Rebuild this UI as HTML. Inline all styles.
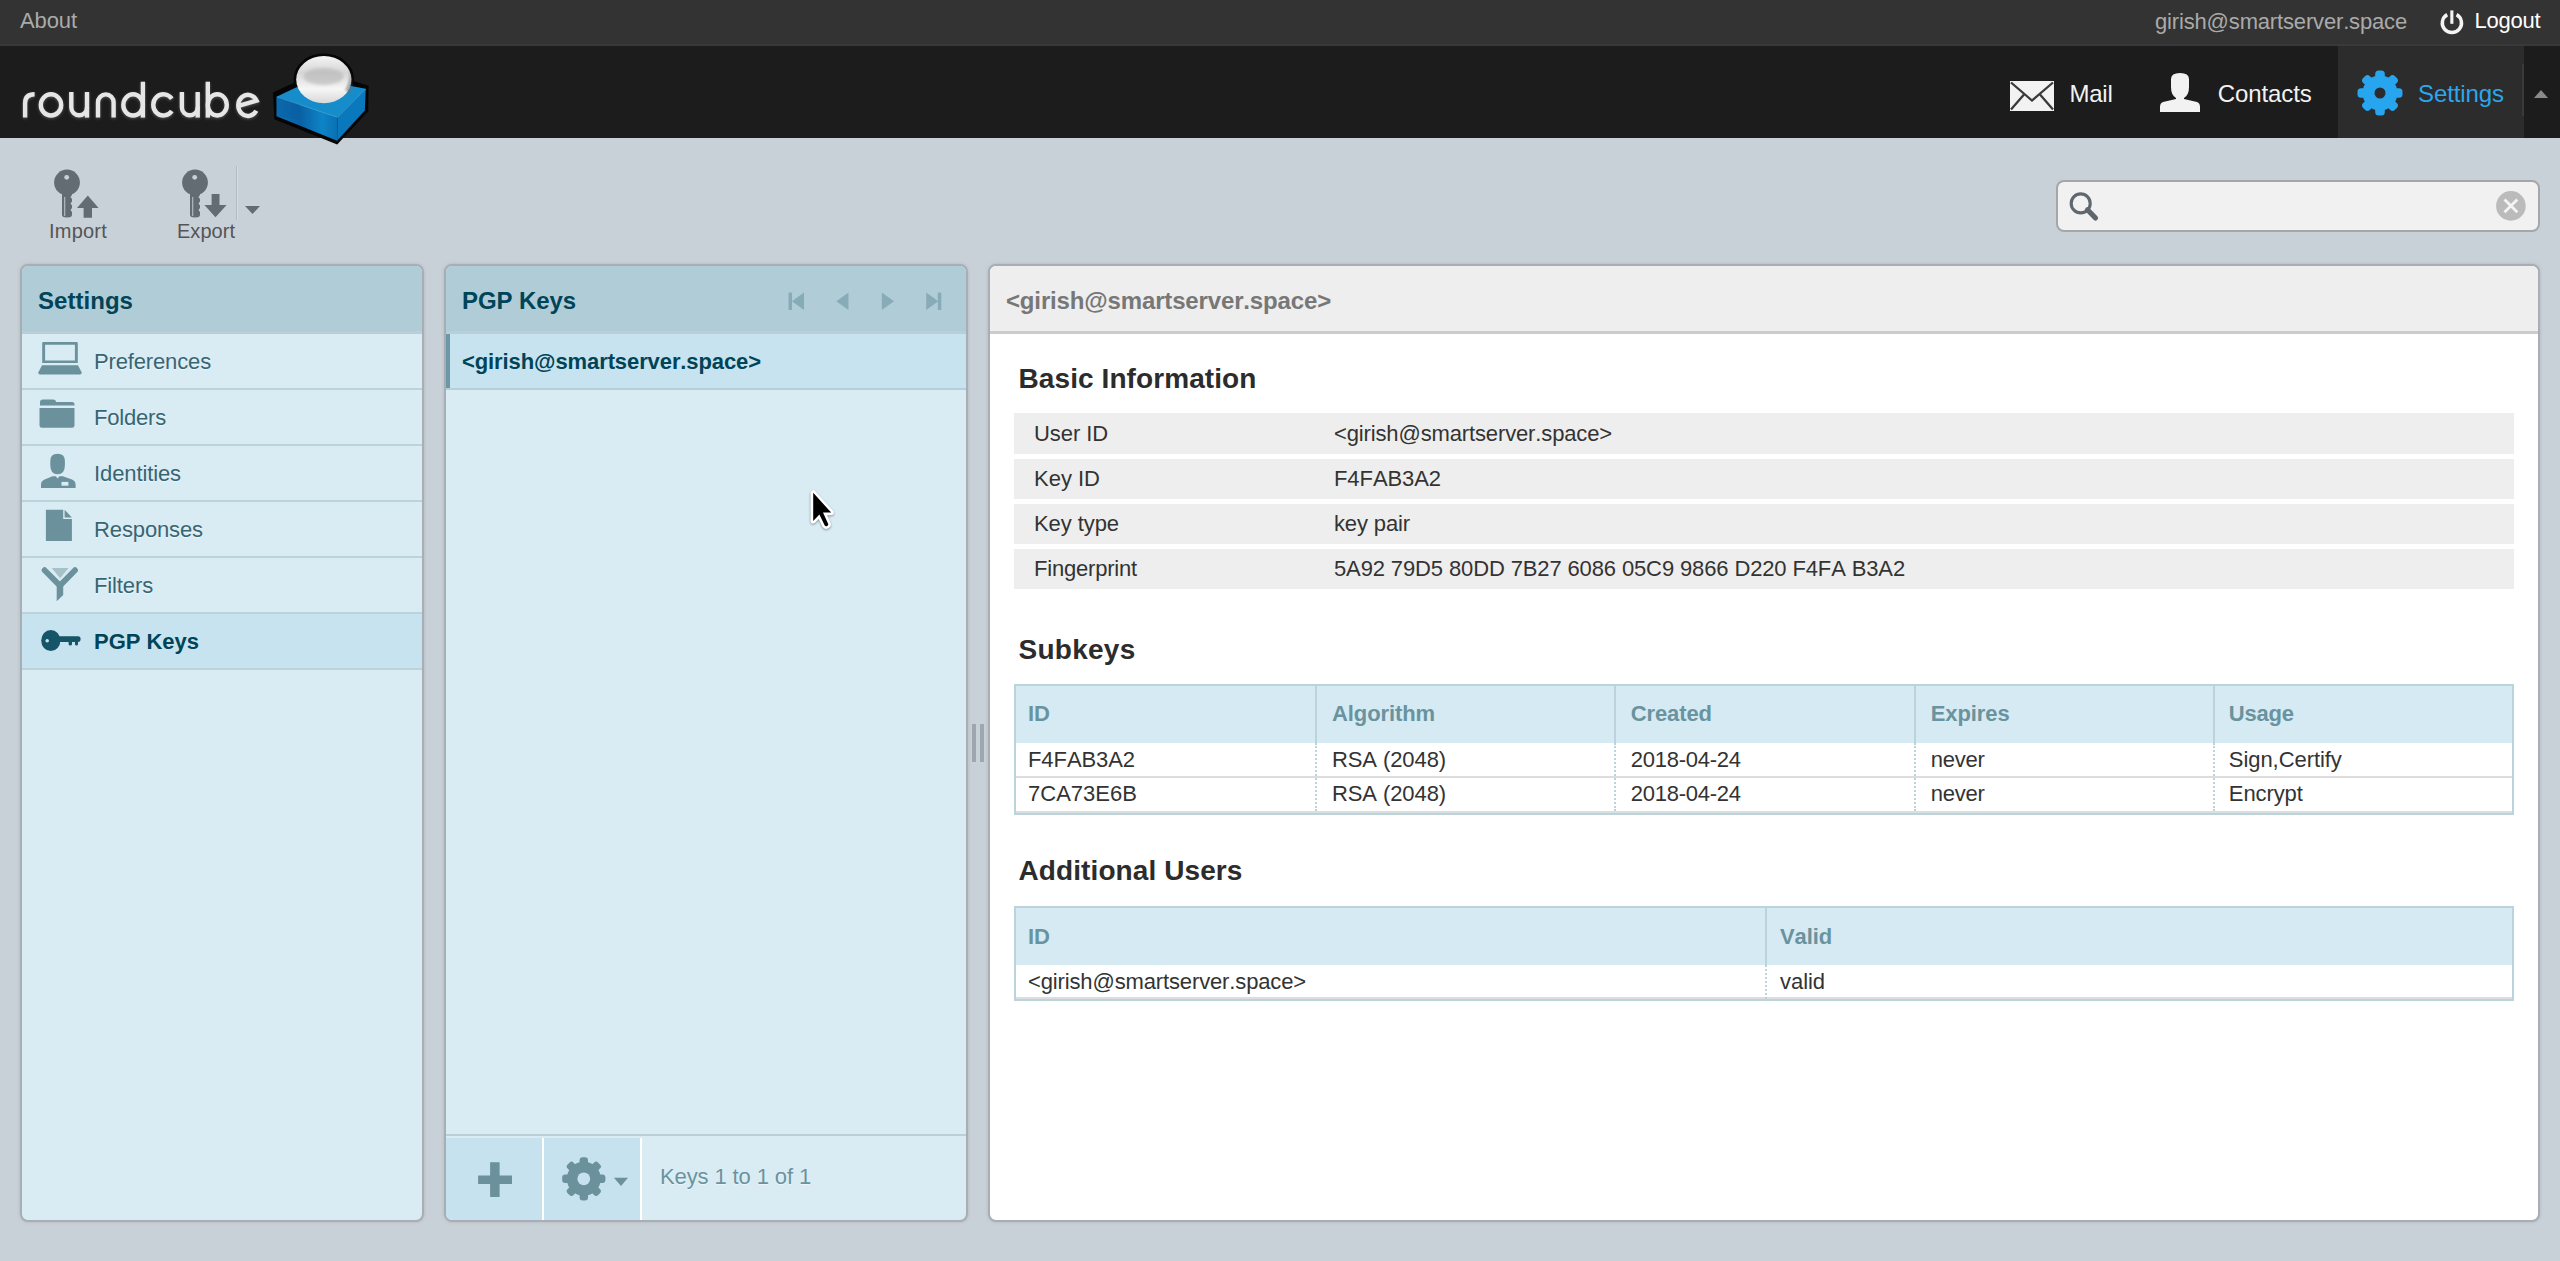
<!DOCTYPE html>
<html><head><meta charset="utf-8">
<style>
*{box-sizing:border-box;margin:0;padding:0}
html,body{width:2560px;height:1261px;overflow:hidden}
body{background:#c9d1d8;font-family:"Liberation Sans",sans-serif;position:relative;color:#333;font-kerning:none}
.a{position:absolute;white-space:nowrap}
.t22{font-size:22px;line-height:22px}
.t24{font-size:24px;line-height:24px}
.t20{font-size:20px;line-height:20px}
.t28{font-size:28px;line-height:28px}
.b{font-weight:bold}
#topline{position:absolute;left:0;top:0;width:2560px;height:46px;background:#333;border-bottom:2px solid #393939}
#header{position:absolute;left:0;top:46px;width:2560px;height:92px;background:#1c1c1c}
.panel{position:absolute;top:264px;height:958px;border:2px solid #a8aeb5;border-radius:8px;overflow:hidden;box-shadow:0 0 3px rgba(150,150,150,.5)}
.btitle{position:absolute;left:0;top:0;right:0;height:68px;background:#b0ccd7;border-bottom:3px solid #b8cfd8}
.listbg{background:#d9ecf4}
.li{position:absolute;left:0;right:0;height:56px;border-bottom:2px solid #bbd3da}
.ltxt{color:#376572;text-shadow:0 1px 1px rgba(255,255,255,.55)}
</style></head><body>
<div id="topline">
  <span class="a t22" style="left:20px;top:10px;color:#aaa;letter-spacing:-0.098px">About</span>
  <span class="a t22" style="left:2155px;top:10.5px;color:#aaa;letter-spacing:-0.160px">girish@smartserver.space</span>
  <svg class="a" style="left:2436px;top:6px" width="32" height="32" viewBox="2436 6 32 32">
    <path d="M2447.2 14.6 A9.6 9.6 0 1 0 2456.6 14.6" fill="none" stroke="#f4f4f4" stroke-width="3.5"/>
    <rect x="2450.3" y="10.4" width="3.1" height="13.4" fill="#f4f4f4"/>
  </svg>
  <span class="a t22" style="left:2474.5px;top:10px;color:#fff;letter-spacing:-0.215px">Logout</span>
</div>
<div id="header">
  <svg class="a" style="left:0;top:0" width="400" height="100" viewBox="0 46 400 100">
    <defs>
      <filter id="glow" x="-20%" y="-20%" width="140%" height="160%"><feGaussianBlur in="SourceAlpha" stdDeviation="1.6"/><feOffset dy="2"/><feComponentTransfer><feFuncA type="linear" slope="0.55"/></feComponentTransfer><feFlood flood-color="#fff"/><feComposite operator="in" in2="SourceAlpha"/></filter>
      <linearGradient id="ball" x1="0" y1="0" x2="0" y2="1"><stop offset="0" stop-color="#f4f4f4"/><stop offset="0.35" stop-color="#d6d6d6"/><stop offset="0.7" stop-color="#f6f6f6"/><stop offset="1" stop-color="#d8d8d8"/></linearGradient>
      <linearGradient id="bl" x1="0" y1="0" x2="1" y2="0"><stop offset="0" stop-color="#0c72b8"/><stop offset="0.4" stop-color="#0a62a6"/><stop offset="0.75" stop-color="#0d84c6"/><stop offset="1" stop-color="#0a6fb3"/></linearGradient>
    </defs>
    <g fill="none" stroke="#e6e6e6" stroke-width="4.4" style="filter:blur(0.35px) drop-shadow(0 1.5px 1.5px rgba(255,255,255,.25))">
      <path d="M25.1 117.5 V103 Q25.1 94.3 34.6 94.3"/>
      <ellipse cx="51" cy="104.9" rx="10.2" ry="10.6"/>
      <path d="M71.3 92 V107.4 A7.85 7.9 0 0 0 87 107.4 V92"/>
      <path d="M87 107 V117.6"/>
      <path d="M98 117.6 V102.3 A7.8 7.9 0 0 1 113.6 102.3 V117.6"/>
      <ellipse cx="133.1" cy="104.9" rx="9.8" ry="10.6"/><path d="M142.9 81.7 V117.6"/>
      <path d="M171.8 98.8 A10.2 10.6 0 1 0 171.8 111"/>
      <path d="M181.9 92 V107.4 A7.9 7.9 0 0 0 197.7 107.4 V92"/>
      <path d="M197.7 107 V117.6"/>
      <ellipse cx="217.3" cy="104.9" rx="9.5" ry="10.6"/><path d="M207.8 81.7 V117.6"/>
      <path d="M256.3 110.8 A9.7 10.6 0 1 1 256.6 100.6 L237.6 106.2"/>
    </g>
    <g>
      <path d="M273 92.5 L300 80 L350 80 L368.6 85.8 L368.2 111.2 L337.2 144.6 L274.3 119.2 Z" fill="#050505"/>
      <ellipse cx="323.8" cy="79.2" rx="30.2" ry="25.8" fill="#050505"/>
      <path d="M276.5 96.8 L337.5 117 L337.1 140.8 L276.6 116.2 Z" fill="url(#bl)"/>
      <path d="M337.5 117 L365.8 88.8 L364.8 110.4 L337.1 140.8 Z" fill="#0a78bd"/>
      <path d="M276.5 96.8 L296.5 87.2 L351 86 L365.8 88.8 L337.5 117 Z" fill="#178ccb"/>
      <path d="M277 97 L337.5 117.2 L365.5 89" fill="none" stroke="#3aa8de" stroke-width="0.9"/>
      <ellipse cx="323.8" cy="79.6" rx="27.6" ry="23.6" fill="url(#ball)"/>
      <ellipse cx="323.5" cy="76.5" rx="20" ry="8.5" fill="#b5b5b5" opacity=".6" style="filter:blur(1.6px)"/>
      <path d="M345 90 Q351 80 349 69 Q353 80 351 94 Z" fill="#6f6f6f" opacity=".55" style="filter:blur(1.2px)"/>
      <path d="M276.5 96.8 L300 104.5 L300 120 L276.6 116.2 Z" fill="#0a5a98" opacity=".35"/>
    </g>
  </svg>
  <!-- taskbar -->
  <svg class="a" style="left:2010px;top:35px" width="44" height="30" viewBox="0 0 44 30">
    <rect x="0" y="0" width="44" height="30" fill="#f2f2f2"/>
    <path d="M1 1.5 L22 19.5 L43 1.5" fill="none" stroke="#3a3a3a" stroke-width="2.3"/>
    <path d="M1 28.5 L14 13.5 M43 28.5 L30 13.5" fill="none" stroke="#3a3a3a" stroke-width="2.3"/>
  </svg>
  <span class="a t24" style="left:2069.5px;top:36.3px;color:#f2f2f2;letter-spacing:-0.251px">Mail</span>
  <svg class="a" style="left:2159px;top:27px" width="42" height="40" viewBox="0 0 42 40">
    <path d="M12 6 Q12 0 21 0 Q30 0 30 6 L30 14 Q30 22 25 25 L25 26 L38 29 Q41 30 41 34 L41 39 L1 39 L1 34 Q1 30 4 29 L17 26 L17 25 Q12 22 12 14 Z" fill="#f2f2f2"/>
  </svg>
  <span class="a t24" style="left:2217.7px;top:36.3px;color:#f2f2f2;letter-spacing:-0.089px">Contacts</span>
  <div class="a" style="left:2338px;top:0;width:186px;height:92px;background:#2c2c2c"></div>
  <div class="a" style="left:2522px;top:18px;width:2px;height:52px;background:#3a3a3a"></div>
  <svg class="a" style="left:2357px;top:24px" width="46" height="46" viewBox="-23 -23 46 46">
    <g transform="translate(0 0)" fill="#27a6ef"><circle r="17.5"/><rect x="-4.8" y="-22.5" width="9.6" height="9.0" rx="3.5" transform="rotate(0.0)"/><rect x="-4.8" y="-22.5" width="9.6" height="9.0" rx="3.5" transform="rotate(45.0)"/><rect x="-4.8" y="-22.5" width="9.6" height="9.0" rx="3.5" transform="rotate(90.0)"/><rect x="-4.8" y="-22.5" width="9.6" height="9.0" rx="3.5" transform="rotate(135.0)"/><rect x="-4.8" y="-22.5" width="9.6" height="9.0" rx="3.5" transform="rotate(180.0)"/><rect x="-4.8" y="-22.5" width="9.6" height="9.0" rx="3.5" transform="rotate(225.0)"/><rect x="-4.8" y="-22.5" width="9.6" height="9.0" rx="3.5" transform="rotate(270.0)"/><rect x="-4.8" y="-22.5" width="9.6" height="9.0" rx="3.5" transform="rotate(315.0)"/><circle r="5.5" fill="#2c2c2c"/></g>
  </svg>
  <span class="a t24" style="left:2418px;top:36.3px;color:#2ba6ef;letter-spacing:-0.090px">Settings</span>
  <svg class="a" style="left:2534px;top:44px" width="14" height="8" viewBox="0 0 14 8"><path d="M0 8 L7 0 L14 8Z" fill="#8a8a8a"/></svg>
</div>


<!-- toolbar -->
<svg class="a" style="left:50px;top:168px" width="52" height="52" viewBox="50 168 52 52">
  <g fill="#646c73">
    <circle cx="67" cy="182.5" r="12.9"/>
    <path d="M62 190 H72 V195 L70.5 197 L72 199 V201.5 L70.5 203.5 L72 205.5 V208 L70.5 210 L72 212 V215 Q72 217.5 67 217.5 Q62 217.5 62 215 Z"/>
    <path d="M77 208 L87.8 195.6 L98.6 208 H92 V217.7 H83.6 V208 Z"/>
  </g>
  <circle cx="66.7" cy="177.3" r="2.4" fill="#c9d1d8"/>
  <rect x="64" y="197" width="1.3" height="19" fill="#aab2b8"/>
</svg>
<span class="a t20" style="left:49px;top:221px;color:#555;letter-spacing:0.220px">Import</span>
<svg class="a" style="left:178px;top:168px" width="52" height="52" viewBox="178 168 52 52">
  <g fill="#646c73">
    <circle cx="195" cy="182.5" r="12.9"/>
    <path d="M190 190 H200 V195 L198.5 197 L200 199 V201.5 L198.5 203.5 L200 205.5 V208 L198.5 210 L200 212 V215 Q200 217.5 195 217.5 Q190 217.5 190 215 Z"/>
    <path d="M211.6 194 H219.5 V205 H226.6 L215.5 217.2 L204.4 205 H211.6 Z"/>
  </g>
  <circle cx="194.7" cy="177.3" r="2.4" fill="#c9d1d8"/>
  <rect x="192" y="197" width="1.3" height="19" fill="#aab2b8"/>
</svg>
<span class="a t20" style="left:177px;top:221px;color:#555;letter-spacing:0.033px">Export</span>
<div class="a" style="left:236px;top:166px;width:1px;height:54px;background:#b3bac1"></div>
<div class="a" style="left:237px;top:166px;width:1px;height:54px;background:#d6dce1"></div>
<svg class="a" style="left:245px;top:206px" width="15" height="8" viewBox="0 0 15 8"><path d="M0 0 H15 L7.5 8Z" fill="#646c73"/></svg>

<!-- search -->
<div class="a" style="left:2056px;top:180px;width:484px;height:52px;background:#f1f1f1;border:2px solid #a4a7aa;border-radius:8px"></div>
<svg class="a" style="left:2066px;top:190px" width="34" height="34" viewBox="2066 190 34 34">
  <circle cx="2080.7" cy="203.4" r="9.5" fill="none" stroke="#60686e" stroke-width="3.1"/>
  <path d="M2087.5 209.8 L2095.5 218" stroke="#5f676d" stroke-width="5.2" stroke-linecap="round"/>
</svg>
<svg class="a" style="left:2494px;top:189px" width="34" height="34" viewBox="2494 189 34 34">
  <circle cx="2510.9" cy="205.9" r="14.8" fill="#bbb"/>
  <path d="M2504.5 199.5 L2517.3 212.3 M2517.3 199.5 L2504.5 212.3" stroke="#f4f4f4" stroke-width="2.8"/>
</svg>

<!-- left panel -->
<div class="panel listbg" style="left:20px;width:404px">
  <div class="btitle"><span class="a t24 b" style="left:16px;top:23px;color:#004458;letter-spacing:0.041px">Settings</span></div>
  <div class="li" style="top:68px;height:56px;"></div>
  <span class="a t22 ltxt" style="left:72px;top:85.0px;letter-spacing:-0.147px">Preferences</span>
  <div class="li" style="top:124px;height:56px;"></div>
  <span class="a t22 ltxt" style="left:72px;top:141.0px;letter-spacing:-0.194px">Folders</span>
  <div class="li" style="top:180px;height:56px;"></div>
  <span class="a t22 ltxt" style="left:72px;top:197.0px;letter-spacing:-0.105px">Identities</span>
  <div class="li" style="top:236px;height:56px;"></div>
  <span class="a t22 ltxt" style="left:72px;top:253.0px;letter-spacing:-0.118px">Responses</span>
  <div class="li" style="top:292px;height:56px;"></div>
  <span class="a t22 ltxt" style="left:72px;top:309.0px;letter-spacing:-0.127px">Filters</span>
  <div class="li" style="top:348px;height:56px;background:#c7e3ef;"></div>
  <span class="a t22 b" style="left:72px;top:365.0px;color:#004458;letter-spacing:-0.021px">PGP Keys</span>
  <svg class="a" style="left:0;top:0" width="80" height="420" viewBox="22 266 80 420">
    <g fill="#6b919c">
      <path d="M43.5 341.9 H76.5 Q77.8 341.9 77.8 343.2 V363.1 H42.2 V343.2 Q42.2 341.9 43.5 341.9 Z M45.1 344.8 V360.6 H74.9 V344.8 Z" fill-rule="evenodd"/>
      <path d="M42 365.3 H78 L81.6 372.3 Q82 374.5 80 374.5 H40 Q38 374.5 38.4 372.3 Z"/>
      <path d="M40 402 Q40 399.5 43 399.5 H53 Q56 399.5 56 402 H72 Q74.5 402 74.5 404.5 V405.5 H40 Z"/>
      <path d="M39.5 408 H74.5 V425.5 Q74.5 427.8 72 427.8 H42 Q39.5 427.8 39.5 425.5 Z"/>
      <path d="M50.3 461 Q50.3 453.7 57.6 453.7 Q64.9 453.7 64.9 461 V465 Q64.9 474.3 57.6 474.3 Q50.3 474.3 50.3 465 Z"/>
      <path d="M52.5 476.2 H55.8 L57.6 478.4 L59.4 476.2 H62.8 L72 479.5 Q75.6 481 75.6 484.5 V488 H41 V484.5 Q41 481 44.6 479.5 Z"/>
      <path d="M45.9 509.8 H63.2 V518.9 H71.9 V541.1 H45.9 Z"/>
      <path d="M64.6 509.8 L71.9 517.4 H64.6 Z"/>
      <path d="M56.7 584 H63.2 V595 L56.7 601.3 Z"/>
    </g>
    <path d="M44.6 570.2 L59.9 585.6 L75 570.2" fill="none" stroke="#6b919c" stroke-width="5.8" stroke-linecap="round" stroke-linejoin="round"/>
    <path d="M51.7 568 H68.6 L60.1 578.2 Z" fill="#a7c1c9"/>
    <rect x="61.5" y="481.9" width="6.9" height="3.8" fill="#d9ecf4"/>
    <g fill="#165468">
      <ellipse cx="50.8" cy="640.5" rx="9.6" ry="10.6"/>
      <path d="M57 636.3 H78 Q80.6 636.3 80.6 639.1 Q80.6 642 78 642 V644 Q78 645.5 76.6 645.5 Q75 645.5 75 644 V642 H72 V644 Q72 645.5 70.3 645.5 Q68.6 645.5 68.6 644 V642 H57 Z"/>
    </g>
    <circle cx="47.2" cy="640.8" r="1.8" fill="#c7e3ef"/>
  </svg>
</div>
<!-- middle panel -->
<div class="panel listbg" style="left:444px;width:524px">
  <div class="btitle"><span class="a t24 b" style="left:16px;top:23px;color:#004458;letter-spacing:-0.091px">PGP Keys</span>
    <svg class="a" style="left:0;top:0" width="520" height="66" viewBox="446 266 520 66">
      <g fill="#88acb7">
        <rect x="788.5" y="292.5" width="3.5" height="17.5"/>
        <path d="M804 292.5 V310 L792 301.2 Z"/>
        <path d="M848.5 292.5 V310 L836.3 301.2 Z"/>
        <path d="M881.8 292.5 V310 L894 301.2 Z"/>
        <path d="M926.2 292.5 V310 L938.3 301.2 Z"/>
        <rect x="937.8" y="292.5" width="3.5" height="17.5"/>
      </g>
    </svg>
  </div>
  <div class="a" style="left:0;top:68px;width:520px;height:56px;background:#c7e3ef;border-bottom:2px solid #b5ced7"></div>
  <div class="a" style="left:0;top:68px;width:4px;height:54px;background:#6c98a5"></div>
  <span class="a t22 b" style="left:16px;top:84.6px;color:#004458;letter-spacing:-0.097px">&lt;girish@smartserver.space&gt;</span>
  <div class="a" style="left:0;top:868px;width:520px;height:88px;border-top:2px solid #b9d0d8"></div>
  <div class="a" style="left:0;top:872px;width:98px;height:84px;background:#c6e2ee;border-right:2px solid #fff"></div>
  <div class="a" style="left:98px;top:872px;width:98px;height:84px;background:#c6e2ee;border-right:2px solid #fff"></div>
  <svg class="a" style="left:0;top:868px" width="200" height="88" viewBox="446 1134 200 88">
    <g fill="#6b919c">
      <path d="M490.1 1162.2 H499.6 V1175.5 H512 V1184.1 H499.6 V1197 H490.1 V1184.1 H478.1 V1175.5 H490.1 Z"/>
      <g transform="translate(583.8 1178.8)" fill="#6b919c"><circle r="17"/><rect x="-4.2" y="-21.6" width="8.4" height="8.600000000000001" rx="3" transform="rotate(0.0)"/><rect x="-4.2" y="-21.6" width="8.4" height="8.600000000000001" rx="3" transform="rotate(45.0)"/><rect x="-4.2" y="-21.6" width="8.4" height="8.600000000000001" rx="3" transform="rotate(90.0)"/><rect x="-4.2" y="-21.6" width="8.4" height="8.600000000000001" rx="3" transform="rotate(135.0)"/><rect x="-4.2" y="-21.6" width="8.4" height="8.600000000000001" rx="3" transform="rotate(180.0)"/><rect x="-4.2" y="-21.6" width="8.4" height="8.600000000000001" rx="3" transform="rotate(225.0)"/><rect x="-4.2" y="-21.6" width="8.4" height="8.600000000000001" rx="3" transform="rotate(270.0)"/><rect x="-4.2" y="-21.6" width="8.4" height="8.600000000000001" rx="3" transform="rotate(315.0)"/><circle r="6.4" fill="#c6e2ee"/></g>
      <path d="M613.9 1177.7 H628 L621 1185.9 Z"/>
    </g>
  </svg>
  <span class="a t22" style="left:214px;top:900px;color:#69939e;text-shadow:0 1px 1px rgba(255,255,255,.55);letter-spacing:-0.117px">Keys 1 to 1 of 1</span>
</div>
<!-- right panel -->
<div class="panel" style="left:988px;width:1552px;background:#fff">
  <div class="btitle" style="background:#eee;border-bottom-color:#ccc"><span class="a t24 b" style="left:16px;top:23px;color:#777;letter-spacing:-0.151px">&lt;girish@smartserver.space&gt;</span></div>
  <span class="a t28 b" style="left:28.5px;top:98.8px;color:#2c2c2c;letter-spacing:0.089px">Basic Information</span>
  <div class="a" style="left:24px;top:147.3px;width:1500px;height:40.5px;background:#eee"></div>
  <span class="a t22" style="left:44.0px;top:156.7px;color:#333;letter-spacing:-0.080px">User ID</span>
  <span class="a t22" style="left:344.0px;top:156.7px;color:#333;letter-spacing:-0.136px">&lt;girish@smartserver.space&gt;</span>
  <div class="a" style="left:24px;top:192.5px;width:1500px;height:40.5px;background:#eee"></div>
  <span class="a t22" style="left:44.0px;top:201.9px;color:#333;letter-spacing:-0.004px">Key ID</span>
  <span class="a t22" style="left:344.0px;top:201.9px;color:#333;letter-spacing:-0.076px">F4FAB3A2</span>
  <div class="a" style="left:24px;top:237.7px;width:1500px;height:40.5px;background:#eee"></div>
  <span class="a t22" style="left:44.0px;top:247.1px;color:#333;letter-spacing:-0.076px">Key type</span>
  <span class="a t22" style="left:344.0px;top:247.1px;color:#333;letter-spacing:-0.129px">key pair</span>
  <div class="a" style="left:24px;top:282.9px;width:1500px;height:40.5px;background:#eee"></div>
  <span class="a t22" style="left:44.0px;top:292.3px;color:#333;letter-spacing:-0.196px">Fingerprint</span>
  <span class="a t22" style="left:344.0px;top:292.3px;color:#333;letter-spacing:-0.128px">5A92 79D5 80DD 7B27 6086 05C9 9866 D220 F4FA B3A2</span>
  <span class="a t28 b" style="left:28.5px;top:370.0px;color:#2c2c2c;letter-spacing:0.261px">Subkeys</span>
  <div class="a" style="left:24px;top:418px;width:1500px;height:131px;border:2px solid #bbd3da"></div>
  <div class="a" style="left:26px;top:420px;width:1496px;height:57px;background:#d6eaf3"></div>
  <div class="a" style="left:26px;top:510px;width:1496px;height:2px;background:#ddd"></div>
  <div class="a" style="left:26px;top:545px;width:1496px;height:2px;background:#ddd"></div>
  <span class="a t22 b" style="left:38.0px;top:437.4px;color:#69939e;letter-spacing:0.000px">ID</span>
  <span class="a t22" style="left:38.0px;top:482.6px;color:#333;letter-spacing:-0.076px">F4FAB3A2</span>
  <span class="a t22" style="left:38.0px;top:517.1px;color:#333;letter-spacing:0.019px">7CA73E6B</span>
  <div class="a" style="left:325px;top:420px;width:2px;height:57px;background:#bbd3da"></div>
  <div class="a" style="left:325px;top:477px;width:0;height:68px;border-left:2px dotted #bbd3da"></div>
  <span class="a t22 b" style="left:342.0px;top:437.4px;color:#69939e;letter-spacing:-0.097px">Algorithm</span>
  <span class="a t22" style="left:342.0px;top:482.6px;color:#333;letter-spacing:-0.094px">RSA (2048)</span>
  <span class="a t22" style="left:342.0px;top:517.1px;color:#333;letter-spacing:-0.094px">RSA (2048)</span>
  <div class="a" style="left:624px;top:420px;width:2px;height:57px;background:#bbd3da"></div>
  <div class="a" style="left:624px;top:477px;width:0;height:68px;border-left:2px dotted #bbd3da"></div>
  <span class="a t22 b" style="left:640.8px;top:437.4px;color:#69939e;letter-spacing:-0.131px">Created</span>
  <span class="a t22" style="left:640.8px;top:482.6px;color:#333;letter-spacing:-0.254px">2018-04-24</span>
  <span class="a t22" style="left:640.8px;top:517.1px;color:#333;letter-spacing:-0.254px">2018-04-24</span>
  <div class="a" style="left:924px;top:420px;width:2px;height:57px;background:#bbd3da"></div>
  <div class="a" style="left:924px;top:477px;width:0;height:68px;border-left:2px dotted #bbd3da"></div>
  <span class="a t22 b" style="left:940.7px;top:437.4px;color:#69939e;letter-spacing:-0.070px">Expires</span>
  <span class="a t22" style="left:940.7px;top:482.6px;color:#333;letter-spacing:-0.206px">never</span>
  <span class="a t22" style="left:940.7px;top:517.1px;color:#333;letter-spacing:-0.206px">never</span>
  <div class="a" style="left:1223px;top:420px;width:2px;height:57px;background:#bbd3da"></div>
  <div class="a" style="left:1223px;top:477px;width:0;height:68px;border-left:2px dotted #bbd3da"></div>
  <span class="a t22 b" style="left:1238.8px;top:437.4px;color:#69939e;letter-spacing:-0.206px">Usage</span>
  <span class="a t22" style="left:1238.8px;top:482.6px;color:#333;letter-spacing:-0.059px">Sign,Certify</span>
  <span class="a t22" style="left:1238.8px;top:517.1px;color:#333;letter-spacing:-0.083px">Encrypt</span>
  <span class="a t28 b" style="left:28.5px;top:591.4px;color:#2c2c2c;letter-spacing:0.095px">Additional Users</span>
  <div class="a" style="left:24px;top:640px;width:1500px;height:95px;border:2px solid #bbd3da"></div>
  <div class="a" style="left:26px;top:642px;width:1496px;height:57px;background:#d6eaf3"></div>
  <div class="a" style="left:26px;top:731px;width:1496px;height:2px;background:#ddd"></div>
  <span class="a t22 b" style="left:38.0px;top:660.4px;color:#69939e;letter-spacing:0.000px">ID</span>
  <span class="a t22" style="left:38.0px;top:705.0px;color:#333;letter-spacing:-0.136px">&lt;girish@smartserver.space&gt;</span>
  <div class="a" style="left:775px;top:642px;width:2px;height:57px;background:#bbd3da"></div>
  <div class="a" style="left:775px;top:699px;width:0;height:34px;border-left:2px dotted #bbd3da"></div>
  <span class="a t22 b" style="left:790.0px;top:660.4px;color:#69939e;letter-spacing:-0.114px">Valid</span>
  <span class="a t22" style="left:790.0px;top:705.0px;color:#333;letter-spacing:-0.049px">valid</span>
</div>
<!-- splitter -->
<div class="a" style="left:972px;top:724px;width:4px;height:38px;background:#9ea7ae"></div>
<div class="a" style="left:980px;top:724px;width:4px;height:38px;background:#9ea7ae"></div>
<!-- cursor -->
<svg class="a" style="left:800px;top:480px" width="45" height="55" viewBox="800 480 45 55">
  <path d="M813.2 492.8 V521 L819.4 514.5 L824.6 525.2 Q825.5 526.8 827.2 526 Q828.8 525.2 828 523.6 L823 512.6 H831.2 Z" fill="#fff" stroke="#fff" stroke-width="5.2" stroke-linejoin="round" style="filter:drop-shadow(0.5px 1px 1px rgba(0,0,0,.4))"/>
  <path d="M813.2 492.8 V521 L819.4 514.5 L824.6 525.2 Q825.5 526.8 827.2 526 Q828.8 525.2 828 523.6 L823 512.6 H831.2 Z" fill="#000"/>
</svg>

</body></html>
